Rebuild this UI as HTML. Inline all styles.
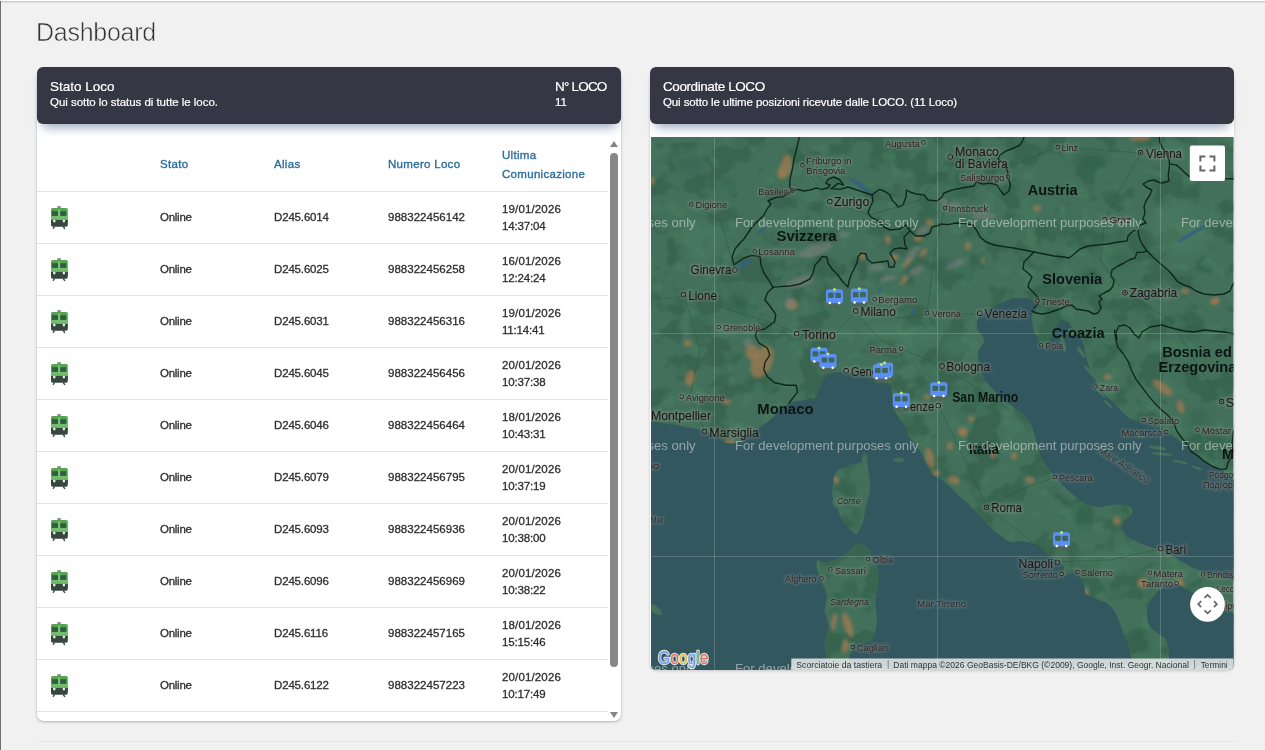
<!DOCTYPE html>
<html lang="it"><head><meta charset="utf-8"><title>Dashboard</title>
<style>
*{box-sizing:border-box;margin:0;padding:0}
html,body{width:1265px;height:750px;overflow:hidden}
body{background:#f1f1f1;font-family:"Liberation Sans",sans-serif;position:relative;color:#333}
.topline{position:absolute;left:0;top:0;width:1265px;height:3px;background:linear-gradient(#fff 0,#fff 1px,#c9c9c9 1px,#d5d5d5 2px,#e6e6e6 3px)}
.leftline{position:absolute;left:0;top:1px;width:1px;height:749px;background:#6e6e6e}
.title{position:absolute;left:36px;top:15px;font-size:25px;font-weight:400;color:#333;-webkit-text-stroke:0.55px #f1f1f1;line-height:34px;letter-spacing:-0.26px}
.card{position:absolute;background:#fff;border-radius:7px;box-shadow:0 1px 3px rgba(0,0,0,.28)}
#card1{left:37px;top:70px;width:584px;height:651px}
#card2{left:650px;top:70px;width:584px;height:600px;box-shadow:0 1px 3px rgba(0,0,0,.18)}
.hdr{position:absolute;top:67px;height:57px;width:584px;background:#363744;border-radius:6px;color:#fff;box-shadow:0 9px 10px -6px rgba(80,100,135,.6)}
#hdr1{left:37px}#hdr2{left:650px}
.h1t{position:absolute;left:13px;top:10.6px;-webkit-text-stroke:0.2px #fff;font-size:13.5px;line-height:18px;white-space:nowrap}
.h1s{position:absolute;left:13px;top:27.8px;-webkit-text-stroke:0.2px #fff;font-size:11.5px;line-height:15px;white-space:nowrap;letter-spacing:-0.04px}
.h1t.r,.h1s.r{left:518px}
.thead{position:absolute;left:37px;top:137px;width:571px;height:55px;border-bottom:1px solid #e3e4e6}
.th{position:absolute;font-size:11.5px;font-weight:400;color:#2d6c9c;-webkit-text-stroke:0.35px #2d6c9c;line-height:16px;white-space:nowrap;letter-spacing:0.3px}
.th{top:19px}.th.a{top:10px}.th.b{top:29px}
.c1{left:123px}.c2{left:237px}.c3{left:351px}.c4{left:465px}
.row{position:absolute;left:37px;width:571px;height:53px;border-bottom:1px solid #e3e4e6}
.c{position:absolute;top:18px;font-size:11.5px;font-weight:400;color:#2e2e2e;-webkit-text-stroke:0.3px #2e2e2e;line-height:16px;white-space:nowrap}
.c.l1{top:10px}.c.l2{top:27px}
.row svg{position:absolute;left:13px;top:14px}
.lastline{display:none}
.sb-thumb{position:absolute;left:610.4px;top:153px;width:7.4px;height:514px;border-radius:4px;background:#878787}
.sb-up{position:absolute;left:609.8px;top:140.8px;border:4.2px solid transparent;border-bottom:6px solid #858585;border-top:0}
.sb-down{position:absolute;left:609.8px;top:711.8px;border:4.2px solid transparent;border-top:6px solid #858585;border-bottom:0}
.hr{position:absolute;left:37px;top:741px;width:1199px;height:1px;background:#e6e6e6}
#map{position:absolute;left:651px;top:137px}

.c.c1{letter-spacing:-0.26px}.c.c2{letter-spacing:-0.16px}.c.c3{letter-spacing:0.02px}.c.l1{letter-spacing:0.14px}.c.l2{letter-spacing:-0.17px}
#hdr1 .h1t.r{letter-spacing:-0.8px}
#hdr2 .h1t{letter-spacing:-0.42px}#hdr2 .h1s{letter-spacing:-0.115px}

#wrap{position:absolute;left:0;top:0;width:1265px;height:750px;will-change:transform}

</style></head><body><div id="wrap">
<div class="topline"></div><div class="leftline"></div>
<h1 class="title">Dashboard</h1>
<div class="card" id="card1"></div>
<div class="hdr" id="hdr1"><div class="h1t">Stato Loco</div><div class="h1s">Qui sotto lo status di tutte le loco.</div><div class="h1t r">N° LOCO</div><div class="h1s r">11</div></div>
<div class="thead"><span class="th c1">Stato</span><span class="th c2">Alias</span><span class="th c3">Numero Loco</span><span class="th c4 a">Ultima</span><span class="th c4 b">Comunicazione</span></div>
<div class="row" style="top:191px"><svg width="19" height="25" viewBox="0 0 19 25"><rect x="7.2" y="1" width="3.8" height="3" rx="1" fill="#8b958c"/><rect x="1" y="2.9" width="16.8" height="13" rx="1.6" fill="#55a353"/><rect x="1" y="10.8" width="16.8" height="4.5" fill="#72bc6e"/><rect x="1.9" y="6.2" width="6.3" height="4.7" fill="#2c6238"/><rect x="10.1" y="6.2" width="6" height="4.7" fill="#2c6238"/><rect x="8.2" y="4.5" width="1.9" height="7" fill="#86c486"/><rect x="1" y="14.9" width="16.8" height="6.8" rx="1.8" fill="#37463e"/><rect x="1" y="14.9" width="16.8" height="3" fill="#37463e"/><circle cx="4.3" cy="16.1" r="1.3" fill="#e6f5e0"/><circle cx="13.9" cy="16.1" r="1.3" fill="#e6f5e0"/><path d="M4.6 21.5l-1.6 2.4M13.2 21.5l1.7 2.4" stroke="#37463e" stroke-width="1.3"/></svg>
<span class="c c1">Online</span><span class="c c2">D245.6014</span><span class="c c3">988322456142</span><span class="c c4 l1">19/01/2026</span><span class="c c4 l2">14:37:04</span></div>
<div class="row" style="top:243px"><svg width="19" height="25" viewBox="0 0 19 25"><rect x="7.2" y="1" width="3.8" height="3" rx="1" fill="#8b958c"/><rect x="1" y="2.9" width="16.8" height="13" rx="1.6" fill="#55a353"/><rect x="1" y="10.8" width="16.8" height="4.5" fill="#72bc6e"/><rect x="1.9" y="6.2" width="6.3" height="4.7" fill="#2c6238"/><rect x="10.1" y="6.2" width="6" height="4.7" fill="#2c6238"/><rect x="8.2" y="4.5" width="1.9" height="7" fill="#86c486"/><rect x="1" y="14.9" width="16.8" height="6.8" rx="1.8" fill="#37463e"/><rect x="1" y="14.9" width="16.8" height="3" fill="#37463e"/><circle cx="4.3" cy="16.1" r="1.3" fill="#e6f5e0"/><circle cx="13.9" cy="16.1" r="1.3" fill="#e6f5e0"/><path d="M4.6 21.5l-1.6 2.4M13.2 21.5l1.7 2.4" stroke="#37463e" stroke-width="1.3"/></svg>
<span class="c c1">Online</span><span class="c c2">D245.6025</span><span class="c c3">988322456258</span><span class="c c4 l1">16/01/2026</span><span class="c c4 l2">12:24:24</span></div>
<div class="row" style="top:295px"><svg width="19" height="25" viewBox="0 0 19 25"><rect x="7.2" y="1" width="3.8" height="3" rx="1" fill="#8b958c"/><rect x="1" y="2.9" width="16.8" height="13" rx="1.6" fill="#55a353"/><rect x="1" y="10.8" width="16.8" height="4.5" fill="#72bc6e"/><rect x="1.9" y="6.2" width="6.3" height="4.7" fill="#2c6238"/><rect x="10.1" y="6.2" width="6" height="4.7" fill="#2c6238"/><rect x="8.2" y="4.5" width="1.9" height="7" fill="#86c486"/><rect x="1" y="14.9" width="16.8" height="6.8" rx="1.8" fill="#37463e"/><rect x="1" y="14.9" width="16.8" height="3" fill="#37463e"/><circle cx="4.3" cy="16.1" r="1.3" fill="#e6f5e0"/><circle cx="13.9" cy="16.1" r="1.3" fill="#e6f5e0"/><path d="M4.6 21.5l-1.6 2.4M13.2 21.5l1.7 2.4" stroke="#37463e" stroke-width="1.3"/></svg>
<span class="c c1">Online</span><span class="c c2">D245.6031</span><span class="c c3">988322456316</span><span class="c c4 l1">19/01/2026</span><span class="c c4 l2">11:14:41</span></div>
<div class="row" style="top:347px"><svg width="19" height="25" viewBox="0 0 19 25"><rect x="7.2" y="1" width="3.8" height="3" rx="1" fill="#8b958c"/><rect x="1" y="2.9" width="16.8" height="13" rx="1.6" fill="#55a353"/><rect x="1" y="10.8" width="16.8" height="4.5" fill="#72bc6e"/><rect x="1.9" y="6.2" width="6.3" height="4.7" fill="#2c6238"/><rect x="10.1" y="6.2" width="6" height="4.7" fill="#2c6238"/><rect x="8.2" y="4.5" width="1.9" height="7" fill="#86c486"/><rect x="1" y="14.9" width="16.8" height="6.8" rx="1.8" fill="#37463e"/><rect x="1" y="14.9" width="16.8" height="3" fill="#37463e"/><circle cx="4.3" cy="16.1" r="1.3" fill="#e6f5e0"/><circle cx="13.9" cy="16.1" r="1.3" fill="#e6f5e0"/><path d="M4.6 21.5l-1.6 2.4M13.2 21.5l1.7 2.4" stroke="#37463e" stroke-width="1.3"/></svg>
<span class="c c1">Online</span><span class="c c2">D245.6045</span><span class="c c3">988322456456</span><span class="c c4 l1">20/01/2026</span><span class="c c4 l2">10:37:38</span></div>
<div class="row" style="top:399px"><svg width="19" height="25" viewBox="0 0 19 25"><rect x="7.2" y="1" width="3.8" height="3" rx="1" fill="#8b958c"/><rect x="1" y="2.9" width="16.8" height="13" rx="1.6" fill="#55a353"/><rect x="1" y="10.8" width="16.8" height="4.5" fill="#72bc6e"/><rect x="1.9" y="6.2" width="6.3" height="4.7" fill="#2c6238"/><rect x="10.1" y="6.2" width="6" height="4.7" fill="#2c6238"/><rect x="8.2" y="4.5" width="1.9" height="7" fill="#86c486"/><rect x="1" y="14.9" width="16.8" height="6.8" rx="1.8" fill="#37463e"/><rect x="1" y="14.9" width="16.8" height="3" fill="#37463e"/><circle cx="4.3" cy="16.1" r="1.3" fill="#e6f5e0"/><circle cx="13.9" cy="16.1" r="1.3" fill="#e6f5e0"/><path d="M4.6 21.5l-1.6 2.4M13.2 21.5l1.7 2.4" stroke="#37463e" stroke-width="1.3"/></svg>
<span class="c c1">Online</span><span class="c c2">D245.6046</span><span class="c c3">988322456464</span><span class="c c4 l1">18/01/2026</span><span class="c c4 l2">10:43:31</span></div>
<div class="row" style="top:451px"><svg width="19" height="25" viewBox="0 0 19 25"><rect x="7.2" y="1" width="3.8" height="3" rx="1" fill="#8b958c"/><rect x="1" y="2.9" width="16.8" height="13" rx="1.6" fill="#55a353"/><rect x="1" y="10.8" width="16.8" height="4.5" fill="#72bc6e"/><rect x="1.9" y="6.2" width="6.3" height="4.7" fill="#2c6238"/><rect x="10.1" y="6.2" width="6" height="4.7" fill="#2c6238"/><rect x="8.2" y="4.5" width="1.9" height="7" fill="#86c486"/><rect x="1" y="14.9" width="16.8" height="6.8" rx="1.8" fill="#37463e"/><rect x="1" y="14.9" width="16.8" height="3" fill="#37463e"/><circle cx="4.3" cy="16.1" r="1.3" fill="#e6f5e0"/><circle cx="13.9" cy="16.1" r="1.3" fill="#e6f5e0"/><path d="M4.6 21.5l-1.6 2.4M13.2 21.5l1.7 2.4" stroke="#37463e" stroke-width="1.3"/></svg>
<span class="c c1">Online</span><span class="c c2">D245.6079</span><span class="c c3">988322456795</span><span class="c c4 l1">20/01/2026</span><span class="c c4 l2">10:37:19</span></div>
<div class="row" style="top:503px"><svg width="19" height="25" viewBox="0 0 19 25"><rect x="7.2" y="1" width="3.8" height="3" rx="1" fill="#8b958c"/><rect x="1" y="2.9" width="16.8" height="13" rx="1.6" fill="#55a353"/><rect x="1" y="10.8" width="16.8" height="4.5" fill="#72bc6e"/><rect x="1.9" y="6.2" width="6.3" height="4.7" fill="#2c6238"/><rect x="10.1" y="6.2" width="6" height="4.7" fill="#2c6238"/><rect x="8.2" y="4.5" width="1.9" height="7" fill="#86c486"/><rect x="1" y="14.9" width="16.8" height="6.8" rx="1.8" fill="#37463e"/><rect x="1" y="14.9" width="16.8" height="3" fill="#37463e"/><circle cx="4.3" cy="16.1" r="1.3" fill="#e6f5e0"/><circle cx="13.9" cy="16.1" r="1.3" fill="#e6f5e0"/><path d="M4.6 21.5l-1.6 2.4M13.2 21.5l1.7 2.4" stroke="#37463e" stroke-width="1.3"/></svg>
<span class="c c1">Online</span><span class="c c2">D245.6093</span><span class="c c3">988322456936</span><span class="c c4 l1">20/01/2026</span><span class="c c4 l2">10:38:00</span></div>
<div class="row" style="top:555px"><svg width="19" height="25" viewBox="0 0 19 25"><rect x="7.2" y="1" width="3.8" height="3" rx="1" fill="#8b958c"/><rect x="1" y="2.9" width="16.8" height="13" rx="1.6" fill="#55a353"/><rect x="1" y="10.8" width="16.8" height="4.5" fill="#72bc6e"/><rect x="1.9" y="6.2" width="6.3" height="4.7" fill="#2c6238"/><rect x="10.1" y="6.2" width="6" height="4.7" fill="#2c6238"/><rect x="8.2" y="4.5" width="1.9" height="7" fill="#86c486"/><rect x="1" y="14.9" width="16.8" height="6.8" rx="1.8" fill="#37463e"/><rect x="1" y="14.9" width="16.8" height="3" fill="#37463e"/><circle cx="4.3" cy="16.1" r="1.3" fill="#e6f5e0"/><circle cx="13.9" cy="16.1" r="1.3" fill="#e6f5e0"/><path d="M4.6 21.5l-1.6 2.4M13.2 21.5l1.7 2.4" stroke="#37463e" stroke-width="1.3"/></svg>
<span class="c c1">Online</span><span class="c c2">D245.6096</span><span class="c c3">988322456969</span><span class="c c4 l1">20/01/2026</span><span class="c c4 l2">10:38:22</span></div>
<div class="row" style="top:607px"><svg width="19" height="25" viewBox="0 0 19 25"><rect x="7.2" y="1" width="3.8" height="3" rx="1" fill="#8b958c"/><rect x="1" y="2.9" width="16.8" height="13" rx="1.6" fill="#55a353"/><rect x="1" y="10.8" width="16.8" height="4.5" fill="#72bc6e"/><rect x="1.9" y="6.2" width="6.3" height="4.7" fill="#2c6238"/><rect x="10.1" y="6.2" width="6" height="4.7" fill="#2c6238"/><rect x="8.2" y="4.5" width="1.9" height="7" fill="#86c486"/><rect x="1" y="14.9" width="16.8" height="6.8" rx="1.8" fill="#37463e"/><rect x="1" y="14.9" width="16.8" height="3" fill="#37463e"/><circle cx="4.3" cy="16.1" r="1.3" fill="#e6f5e0"/><circle cx="13.9" cy="16.1" r="1.3" fill="#e6f5e0"/><path d="M4.6 21.5l-1.6 2.4M13.2 21.5l1.7 2.4" stroke="#37463e" stroke-width="1.3"/></svg>
<span class="c c1">Online</span><span class="c c2">D245.6116</span><span class="c c3">988322457165</span><span class="c c4 l1">18/01/2026</span><span class="c c4 l2">15:15:46</span></div>
<div class="row" style="top:659px"><svg width="19" height="25" viewBox="0 0 19 25"><rect x="7.2" y="1" width="3.8" height="3" rx="1" fill="#8b958c"/><rect x="1" y="2.9" width="16.8" height="13" rx="1.6" fill="#55a353"/><rect x="1" y="10.8" width="16.8" height="4.5" fill="#72bc6e"/><rect x="1.9" y="6.2" width="6.3" height="4.7" fill="#2c6238"/><rect x="10.1" y="6.2" width="6" height="4.7" fill="#2c6238"/><rect x="8.2" y="4.5" width="1.9" height="7" fill="#86c486"/><rect x="1" y="14.9" width="16.8" height="6.8" rx="1.8" fill="#37463e"/><rect x="1" y="14.9" width="16.8" height="3" fill="#37463e"/><circle cx="4.3" cy="16.1" r="1.3" fill="#e6f5e0"/><circle cx="13.9" cy="16.1" r="1.3" fill="#e6f5e0"/><path d="M4.6 21.5l-1.6 2.4M13.2 21.5l1.7 2.4" stroke="#37463e" stroke-width="1.3"/></svg>
<span class="c c1">Online</span><span class="c c2">D245.6122</span><span class="c c3">988322457223</span><span class="c c4 l1">20/01/2026</span><span class="c c4 l2">10:17:49</span></div>

<div class="lastline"></div>
<div class="sb-up"></div><div class="sb-thumb"></div><div class="sb-down"></div>
<div class="card" id="card2"></div>
<div class="hdr" id="hdr2"><div class="h1t">Coordinate LOCO</div><div class="h1s">Qui sotto le ultime posizioni ricevute dalle LOCO. (11 Loco)</div></div>
<svg id="map" width="583" height="533" viewBox="651 137 583 533" font-family="Liberation Sans, sans-serif">
<defs><clipPath id="mc"><path d="M651,137H1233.5V665a5,5 0 0 1 -5,5H656a5,5 0 0 1 -5,-5Z"/></clipPath><filter id="b2" x="-30%" y="-30%" width="160%" height="160%"><feGaussianBlur stdDeviation="1.6"/></filter><filter id="b1" x="-30%" y="-30%" width="160%" height="160%"><feGaussianBlur stdDeviation="0.7"/></filter><filter id="b4" x="-30%" y="-30%" width="160%" height="160%"><feGaussianBlur stdDeviation="4"/></filter><filter id="tx" x="0" y="0" width="100%" height="100%" color-interpolation-filters="sRGB"><feTurbulence type="fractalNoise" baseFrequency="0.03 0.035" numOctaves="3" seed="11"/><feColorMatrix type="matrix" values="0 0 0 0 0.16  0 0 0 0 0.33  0 0 0 0 0.25  9 0 0 0 -4.6"/></filter><filter id="tx2" x="0" y="0" width="100%" height="100%" color-interpolation-filters="sRGB"><feTurbulence type="fractalNoise" baseFrequency="0.05" numOctaves="2" seed="3"/><feColorMatrix type="matrix" values="0 0 0 0 0.30  0 0 0 0 0.52  0 0 0 0 0.40  0 7 0 0 -3.9"/></filter><filter id="halo" x="0" y="0" width="100%" height="100%" filterUnits="objectBoundingBox"><feMorphology in="SourceAlpha" operator="dilate" radius="0.9" result="d"/><feGaussianBlur in="d" stdDeviation="1.0" result="db"/><feFlood flood-color="#d9cfc8" flood-opacity="0.22"/><feComposite in2="db" operator="in" result="h"/><feMerge><feMergeNode in="h"/><feMergeNode in="SourceGraphic"/></feMerge></filter></defs>
<g clip-path="url(#mc)">
<rect x="651" y="137" width="583" height="533" fill="#43705a"/>
<rect x="651" y="137" width="583" height="533" filter="url(#tx)" opacity="0.38"/>
<rect x="651" y="137" width="583" height="533" filter="url(#tx2)" opacity="0.35"/>
<ellipse cx="786.0" cy="166.0" rx="6.0" ry="12.0" fill="#a6794f" fill-opacity="0.7" filter="url(#b2)" transform="rotate(12 786.0 166.0)"/>
<ellipse cx="781.0" cy="174.0" rx="4.0" ry="5.0" fill="#a6794f" fill-opacity="0.7" filter="url(#b2)"/>
<ellipse cx="652.0" cy="181.0" rx="3.0" ry="4.0" fill="#a6794f" fill-opacity="0.7" filter="url(#b2)"/>
<ellipse cx="762.0" cy="362.0" rx="10.0" ry="17.0" fill="#a6794f" fill-opacity="0.7" filter="url(#b2)" transform="rotate(25 762.0 362.0)"/>
<ellipse cx="752.0" cy="352.0" rx="6.0" ry="8.0" fill="#a6794f" fill-opacity="0.7" filter="url(#b2)"/>
<ellipse cx="690.0" cy="378.0" rx="5.0" ry="8.0" fill="#a6794f" fill-opacity="0.7" filter="url(#b2)" transform="rotate(10 690.0 378.0)"/>
<ellipse cx="688.0" cy="343.0" rx="4.0" ry="4.0" fill="#a6794f" fill-opacity="0.7" filter="url(#b2)"/>
<ellipse cx="792.0" cy="305.0" rx="6.0" ry="5.0" fill="#a6794f" fill-opacity="0.7" filter="url(#b2)"/>
<ellipse cx="727.0" cy="402.0" rx="4.0" ry="3.0" fill="#a6794f" fill-opacity="0.7" filter="url(#b2)"/>
<ellipse cx="730.0" cy="442.0" rx="6.0" ry="3.0" fill="#a6794f" fill-opacity="0.7" filter="url(#b2)"/>
<ellipse cx="1162.5" cy="387.6" rx="12.0" ry="4.5" fill="#a6794f" fill-opacity="0.7" filter="url(#b2)" transform="rotate(38 1162.5 387.6)"/>
<ellipse cx="1180.7" cy="406.8" rx="3.5" ry="7.0" fill="#a6794f" fill-opacity="0.7" filter="url(#b2)" transform="rotate(-15 1180.7 406.8)"/>
<ellipse cx="1108.0" cy="377.0" rx="4.0" ry="3.0" fill="#a6794f" fill-opacity="0.7" filter="url(#b2)"/>
<ellipse cx="1214.0" cy="302.0" rx="4.0" ry="3.0" fill="#a6794f" fill-opacity="0.7" filter="url(#b2)"/>
<ellipse cx="1185.0" cy="291.0" rx="4.0" ry="3.0" fill="#a6794f" fill-opacity="0.7" filter="url(#b2)"/>
<ellipse cx="1216.0" cy="300.0" rx="4.0" ry="3.0" fill="#a6794f" fill-opacity="0.7" filter="url(#b2)"/>
<ellipse cx="964.0" cy="432.0" rx="4.0" ry="5.0" fill="#a6794f" fill-opacity="0.7" filter="url(#b2)"/>
<ellipse cx="971.0" cy="419.0" rx="3.0" ry="3.0" fill="#a6794f" fill-opacity="0.7" filter="url(#b2)"/>
<ellipse cx="993.0" cy="454.0" rx="3.0" ry="4.0" fill="#a6794f" fill-opacity="0.7" filter="url(#b2)"/>
<ellipse cx="1014.0" cy="456.0" rx="3.0" ry="4.0" fill="#a6794f" fill-opacity="0.7" filter="url(#b2)"/>
<ellipse cx="930.0" cy="458.0" rx="4.0" ry="11.0" fill="#a6794f" fill-opacity="0.7" filter="url(#b2)" transform="rotate(-15 930.0 458.0)"/>
<ellipse cx="936.0" cy="473.0" rx="4.0" ry="3.0" fill="#a6794f" fill-opacity="0.7" filter="url(#b2)"/>
<ellipse cx="954.0" cy="480.0" rx="6.0" ry="4.0" fill="#a6794f" fill-opacity="0.7" filter="url(#b2)" transform="rotate(20 954.0 480.0)"/>
<ellipse cx="950.0" cy="446.0" rx="3.0" ry="4.0" fill="#a6794f" fill-opacity="0.7" filter="url(#b2)"/>
<ellipse cx="961.0" cy="432.0" rx="3.0" ry="3.0" fill="#a6794f" fill-opacity="0.7" filter="url(#b2)"/>
<ellipse cx="1030.0" cy="480.0" rx="5.0" ry="3.0" fill="#a6794f" fill-opacity="0.7" filter="url(#b2)" transform="rotate(15 1030.0 480.0)"/>
<ellipse cx="927.0" cy="397.0" rx="3.0" ry="3.0" fill="#a6794f" fill-opacity="0.7" filter="url(#b2)"/>
<ellipse cx="838.0" cy="628.0" rx="5.0" ry="10.0" fill="#a6794f" fill-opacity="0.7" filter="url(#b2)" transform="rotate(10 838.0 628.0)"/>
<ellipse cx="848.0" cy="640.0" rx="5.0" ry="12.0" fill="#a6794f" fill-opacity="0.7" filter="url(#b2)" transform="rotate(-10 848.0 640.0)"/>
<ellipse cx="836.0" cy="480.0" rx="3.0" ry="3.0" fill="#a6794f" fill-opacity="0.7" filter="url(#b2)"/>
<ellipse cx="1143.0" cy="583.0" rx="6.0" ry="5.0" fill="#a6794f" fill-opacity="0.7" filter="url(#b2)"/>
<ellipse cx="1180.0" cy="583.0" rx="4.0" ry="4.0" fill="#a6794f" fill-opacity="0.7" filter="url(#b2)"/>
<ellipse cx="1117.0" cy="521.0" rx="4.0" ry="4.0" fill="#a6794f" fill-opacity="0.7" filter="url(#b2)"/>
<ellipse cx="1086.0" cy="592.0" rx="3.0" ry="3.0" fill="#a6794f" fill-opacity="0.7" filter="url(#b2)"/>
<ellipse cx="1037.0" cy="208.0" rx="4.0" ry="3.0" fill="#a6794f" fill-opacity="0.7" filter="url(#b2)"/>
<ellipse cx="968.0" cy="246.0" rx="3.0" ry="4.0" fill="#a6794f" fill-opacity="0.7" filter="url(#b2)"/>
<ellipse cx="1140.0" cy="138.0" rx="11.0" ry="3.0" fill="#a6794f" fill-opacity="0.7" filter="url(#b2)"/>
<ellipse cx="929.6" cy="222.4" rx="4.0" ry="3.0" fill="#a6794f" fill-opacity="0.7" filter="url(#b2)"/>
<ellipse cx="888.0" cy="240.0" rx="3.0" ry="4.0" fill="#a6794f" fill-opacity="0.7" filter="url(#b2)"/>
<ellipse cx="918.4" cy="238.4" rx="5.0" ry="3.0" fill="#a6794f" fill-opacity="0.7" filter="url(#b2)"/>
<ellipse cx="862.4" cy="256.0" rx="3.0" ry="4.0" fill="#a6794f" fill-opacity="0.7" filter="url(#b2)"/>
<ellipse cx="894.4" cy="257.6" rx="4.0" ry="3.0" fill="#a6794f" fill-opacity="0.7" filter="url(#b2)"/>
<ellipse cx="907.2" cy="262.4" rx="2.5" ry="7.0" fill="#a6794f" fill-opacity="0.7" filter="url(#b2)" transform="rotate(40 907.2 262.4)"/>
<ellipse cx="923.2" cy="252.8" rx="2.5" ry="6.0" fill="#a6794f" fill-opacity="0.7" filter="url(#b2)" transform="rotate(40 923.2 252.8)"/>
<ellipse cx="904.0" cy="280.0" rx="2.5" ry="6.0" fill="#a6794f" fill-opacity="0.7" filter="url(#b2)" transform="rotate(40 904.0 280.0)"/>
<ellipse cx="982.4" cy="260.8" rx="1.5" ry="3.5" fill="#a6794f" fill-opacity="0.7" filter="url(#b2)" transform="rotate(20 982.4 260.8)"/>
<ellipse cx="1150.0" cy="545.0" rx="3.0" ry="2.0" fill="#a6794f" fill-opacity="0.7" filter="url(#b2)"/>
<ellipse cx="1127.0" cy="660.0" rx="3.0" ry="3.0" fill="#a6794f" fill-opacity="0.7" filter="url(#b2)"/>
<ellipse cx="815.0" cy="250.0" rx="18.0" ry="6.0" fill="#7d7f80" fill-opacity="0.55" filter="url(#b2)" transform="rotate(-20 815.0 250.0)"/>
<ellipse cx="800.0" cy="282.0" rx="14.0" ry="5.0" fill="#7d7f80" fill-opacity="0.55" filter="url(#b2)" transform="rotate(-15 800.0 282.0)"/>
<ellipse cx="923.2" cy="230.4" rx="8.0" ry="3.5" fill="#7d7f80" fill-opacity="0.55" filter="url(#b2)" transform="rotate(-30 923.2 230.4)"/>
<ellipse cx="843.2" cy="234.4" rx="6.0" ry="3.0" fill="#7d7f80" fill-opacity="0.55" filter="url(#b2)"/>
<ellipse cx="912.0" cy="254.4" rx="4.0" ry="10.0" fill="#7d7f80" fill-opacity="0.55" filter="url(#b2)" transform="rotate(35 912.0 254.4)"/>
<ellipse cx="916.8" cy="270.4" rx="8.0" ry="4.0" fill="#7d7f80" fill-opacity="0.55" filter="url(#b2)" transform="rotate(-30 916.8 270.4)"/>
<ellipse cx="876.8" cy="267.2" rx="8.0" ry="3.0" fill="#7d7f80" fill-opacity="0.55" filter="url(#b2)"/>
<ellipse cx="888.0" cy="278.4" rx="9.0" ry="3.0" fill="#7d7f80" fill-opacity="0.55" filter="url(#b2)" transform="rotate(-10 888.0 278.4)"/>
<ellipse cx="955.2" cy="264.0" rx="10.0" ry="3.5" fill="#7d7f80" fill-opacity="0.55" filter="url(#b2)" transform="rotate(-25 955.2 264.0)"/>
<ellipse cx="984.0" cy="216.0" rx="12.0" ry="3.5" fill="#7d7f80" fill-opacity="0.55" filter="url(#b2)"/>
<ellipse cx="944.0" cy="201.6" rx="5.0" ry="3.0" fill="#7d7f80" fill-opacity="0.55" filter="url(#b2)"/>
<ellipse cx="790.0" cy="303.0" rx="5.0" ry="6.0" fill="#7d7f80" fill-opacity="0.55" filter="url(#b2)"/>
<ellipse cx="748.0" cy="343.0" rx="4.0" ry="5.0" fill="#7d7f80" fill-opacity="0.55" filter="url(#b2)"/>
<ellipse cx="955.0" cy="205.0" rx="6.0" ry="3.0" fill="#7d7f80" fill-opacity="0.55" filter="url(#b2)"/>
<ellipse cx="690.0" cy="165.0" rx="14.0" ry="9.0" fill="#2f5f49" fill-opacity="0.45" filter="url(#b4)"/>
<ellipse cx="725.0" cy="185.0" rx="10.0" ry="7.0" fill="#2f5f49" fill-opacity="0.45" filter="url(#b4)"/>
<ellipse cx="1090.0" cy="160.0" rx="20.0" ry="10.0" fill="#2f5f49" fill-opacity="0.45" filter="url(#b4)"/>
<ellipse cx="1060.0" cy="230.0" rx="16.0" ry="8.0" fill="#2f5f49" fill-opacity="0.45" filter="url(#b4)"/>
<ellipse cx="1120.0" cy="260.0" rx="14.0" ry="8.0" fill="#2f5f49" fill-opacity="0.45" filter="url(#b4)"/>
<ellipse cx="700.0" cy="330.0" rx="10.0" ry="14.0" fill="#2f5f49" fill-opacity="0.45" filter="url(#b4)"/>
<ellipse cx="740.0" cy="300.0" rx="8.0" ry="10.0" fill="#2f5f49" fill-opacity="0.45" filter="url(#b4)"/>
<ellipse cx="1190.0" cy="330.0" rx="12.0" ry="8.0" fill="#2f5f49" fill-opacity="0.45" filter="url(#b4)"/>
<ellipse cx="1200.0" cy="420.0" rx="10.0" ry="12.0" fill="#2f5f49" fill-opacity="0.45" filter="url(#b4)"/>
<ellipse cx="1080.0" cy="520.0" rx="8.0" ry="8.0" fill="#2f5f49" fill-opacity="0.45" filter="url(#b4)"/>
<ellipse cx="1000.0" cy="500.0" rx="6.0" ry="6.0" fill="#2f5f49" fill-opacity="0.45" filter="url(#b4)"/>
<ellipse cx="1140.0" cy="640.0" rx="8.0" ry="12.0" fill="#2f5f49" fill-opacity="0.45" filter="url(#b4)"/>
<ellipse cx="860.0" cy="520.0" rx="6.0" ry="8.0" fill="#2f5f49" fill-opacity="0.45" filter="url(#b4)"/>
<ellipse cx="900.0" cy="335.0" rx="40.0" ry="10.0" fill="#4a7f62" fill-opacity="0.5" filter="url(#b4)"/>
<ellipse cx="960.0" cy="345.0" rx="20.0" ry="12.0" fill="#4a7f62" fill-opacity="0.5" filter="url(#b4)"/>
<ellipse cx="1180.0" cy="230.0" rx="30.0" ry="25.0" fill="#4a7f62" fill-opacity="0.5" filter="url(#b4)"/>
<ellipse cx="700.0" cy="240.0" rx="20.0" ry="20.0" fill="#4a7f62" fill-opacity="0.5" filter="url(#b4)"/>
<ellipse cx="1100.0" cy="560.0" rx="25.0" ry="10.0" fill="#4a7f62" fill-opacity="0.5" filter="url(#b4)" transform="rotate(20 1100.0 560.0)"/>
<ellipse cx="744.0" cy="264.0" rx="9.0" ry="2.2" fill="#35627a" fill-opacity="0.9" filter="url(#b1)" transform="rotate(-25 744.0 264.0)"/>
<ellipse cx="860.5" cy="185.5" rx="13.0" ry="2.6" fill="#35627a" fill-opacity="0.9" filter="url(#b1)" transform="rotate(34 860.5 185.5)"/>
<ellipse cx="760.7" cy="231.0" rx="6.0" ry="1.5" fill="#35627a" fill-opacity="0.9" filter="url(#b1)" transform="rotate(-40 760.7 231.0)"/>
<ellipse cx="914.0" cy="312.0" rx="1.8" ry="4.5" fill="#35627a" fill-opacity="0.9" filter="url(#b1)"/>
<ellipse cx="1191.0" cy="234.0" rx="17.0" ry="2.0" fill="#35627a" fill-opacity="0.9" filter="url(#b1)" transform="rotate(-30 1191.0 234.0)"/>
<ellipse cx="880.0" cy="290.0" rx="1.2" ry="4.0" fill="#35627a" fill-opacity="0.9" filter="url(#b1)" transform="rotate(20 880.0 290.0)"/>
<g fill="#32575e" stroke="#32575e" stroke-width="0.6" stroke-linejoin="round">
<path d="M651.0,420.8 L659.6,422.4 L669.2,424.8 L678.8,425.6 L688.4,428.0 L698.0,429.6 L704.4,431.2 L714.0,434.4 L720.4,439.2 L725.2,443.2 L733.2,444.0 L739.6,441.6 L744.4,437.6 L752.4,432.8 L762.0,426.4 L768.4,421.6 L776.4,414.4 L782.8,408.8 L789.2,403.2 L797.2,401.6 L806.8,400.0 L811.6,398.4 L813.6,399.8 L816.0,396.6 L818.4,391.8 L820.8,387.0 L822.4,383.0 L824.4,379.0 L827.2,375.8 L832.0,373.8 L837.6,372.6 L843.2,372.2 L845.9,372.3 L853.3,374.5 L861.9,376.8 L869.3,377.9 L876.8,379.8 L884.3,382.5 L890.7,385.1 L892.0,397.3 L893.3,406.7 L896.0,413.3 L900.0,420.0 L904.0,425.3 L906.0,430.7 L908.0,436.0 L913.3,442.7 L918.7,449.3 L922.7,456.0 L925.3,462.7 L929.3,470.7 L934.7,477.3 L935.2,476.4 L940.8,479.6 L947.2,484.4 L953.6,490.8 L960.0,497.2 L966.4,502.8 L972.8,508.4 L977.6,514.8 L982.4,519.6 L988.8,526.0 L995.2,532.4 L1001.2,536.5 L1006.8,540.7 L1011.5,542.5 L1017.1,542.1 L1022.7,541.6 L1029.2,542.5 L1034.8,543.9 L1039.5,546.7 L1042.3,550.5 L1045.1,554.2 L1047.9,556.1 L1053.5,558.9 L1057.2,561.7 L1060.0,563.0 L1064.0,567.0 L1063.0,573.0 L1058.0,575.0 L1066.0,576.0 L1074.0,573.0 L1080.0,578.0 L1084.0,586.0 L1085.0,594.0 L1090.0,597.0 L1098.0,600.0 L1106.0,603.0 L1112.0,608.0 L1116.0,614.0 L1119.0,622.0 L1122.0,630.0 L1125.0,638.0 L1128.0,646.0 L1130.0,654.0 L1131.0,658.0 L1134.0,670.0 L651.0,670.0Z"/>
<path d="M1169.0,670.0 L1169.0,658.0 L1169.0,648.0 L1167.0,640.0 L1160.0,634.0 L1152.0,629.0 L1148.0,622.0 L1147.0,614.0 L1148.0,606.0 L1152.0,598.0 L1158.0,591.0 L1164.0,587.0 L1172.0,585.0 L1178.0,584.0 L1182.0,587.0 L1186.0,590.0 L1192.0,593.0 L1198.0,597.0 L1208.0,601.0 L1222.0,609.0 L1234.0,614.0 L1234.0,670.0Z"/>
<path d="M1234.0,580.0 L1212.0,574.0 L1200.0,570.0 L1190.0,566.0 L1180.0,560.0 L1170.0,554.0 L1160.0,549.0 L1150.0,547.0 L1140.0,543.0 L1130.0,538.0 L1124.0,532.0 L1122.0,526.0 L1126.0,520.0 L1132.0,515.0 L1133.0,509.0 L1128.0,505.0 L1118.0,504.0 L1108.0,505.0 L1100.0,507.0 L1090.0,505.0 L1080.0,500.0 L1070.0,492.0 L1062.0,484.0 L1055.0,477.0 L1048.0,468.0 L1042.0,458.0 L1038.0,446.0 L1034.0,432.0 L1030.0,420.0 L1030.0,422.0 L1026.0,416.0 L1020.0,412.0 L1014.0,407.0 L1006.0,401.0 L998.0,394.0 L990.0,386.0 L984.0,378.0 L981.0,370.0 L979.0,362.0 L978.0,354.0 L980.0,348.0 L985.0,342.0 L983.0,336.0 L978.0,330.0 L977.0,324.0 L979.0,317.0 L988.0,310.0 L1000.0,304.0 L1012.0,299.0 L1024.0,298.0 L1034.0,301.0 L1038.0,302.4 L1036.0,307.0 L1034.0,311.0 L1031.0,316.0 L1032.0,324.0 L1034.0,332.0 L1038.0,340.0 L1041.0,347.0 L1045.0,350.0 L1048.0,346.0 L1052.0,338.0 L1056.0,330.0 L1059.0,323.0 L1062.0,320.0 L1068.0,323.0 L1074.0,330.0 L1080.0,338.0 L1084.0,346.0 L1085.0,354.0 L1087.0,362.0 L1090.0,370.0 L1094.0,378.0 L1098.0,386.0 L1104.0,394.0 L1112.0,402.0 L1120.0,410.0 L1128.0,418.0 L1138.0,422.0 L1144.0,420.0 L1148.0,424.0 L1160.0,429.0 L1168.0,433.0 L1178.0,440.0 L1186.0,446.0 L1194.0,452.0 L1200.0,458.0 L1208.0,464.0 L1216.0,469.0 L1224.0,472.4 L1234.0,480.0 L1234.0,480.0Z"/>
</g>
<g fill="#43705a" stroke="#43705a" stroke-width="0.5" stroke-linejoin="round">
<path d="M865.0,452.4 L866.8,457.2 L867.4,463.2 L868.0,469.2 L869.2,476.4 L869.8,483.6 L869.8,490.8 L868.0,498.0 L866.2,504.0 L865.0,510.0 L863.8,517.2 L862.0,524.4 L859.0,530.4 L856.0,534.6 L852.4,531.6 L848.8,528.0 L845.2,523.2 L841.6,518.4 L839.2,513.6 L838.0,508.8 L834.4,506.4 L832.6,502.8 L833.2,498.0 L832.0,493.2 L832.6,488.4 L833.8,483.6 L833.2,478.8 L835.0,474.0 L838.0,470.4 L842.8,468.0 L847.6,466.2 L852.4,464.4 L857.2,463.8 L861.4,462.6 L862.6,457.2 L863.2,452.4Z"/>
<path d="M857.6,543.2 L864.0,546.0 L869.5,549.6 L870.4,555.1 L873.1,560.6 L876.8,566.1 L878.6,573.4 L878.6,582.5 L876.8,591.7 L875.0,600.8 L875.9,610.0 L876.8,619.1 L875.9,628.2 L874.0,635.5 L870.4,641.0 L864.0,642.9 L856.7,642.9 L853.0,644.7 L851.2,650.2 L849.4,655.7 L848.4,661.1 L847.9,671.2 L827.8,671.2 L827.4,661.1 L825.6,652.0 L824.7,642.9 L827.4,633.7 L829.3,626.4 L827.4,619.1 L824.7,611.8 L825.6,604.5 L827.4,597.2 L825.6,589.8 L822.9,584.4 L821.9,578.9 L818.3,573.4 L816.5,566.1 L817.4,560.6 L821.9,562.4 L827.4,562.4 L834.7,560.6 L842.0,556.9 L847.5,552.4 L853.0,546.9Z"/>
<path d="M893.0,459.5 L897.0,458.3 L903.0,458.8 L905.0,460.5 L901.0,462.0 L895.0,461.8Z"/>
<path d="M651.0,604.0 L655.0,605.0 L660.0,609.0 L662.0,614.0 L658.0,615.0 L651.0,611.0Z"/>
</g>
<clipPath id="isl"><path d="M865.0,452.4 L866.8,457.2 L867.4,463.2 L868.0,469.2 L869.2,476.4 L869.8,483.6 L869.8,490.8 L868.0,498.0 L866.2,504.0 L865.0,510.0 L863.8,517.2 L862.0,524.4 L859.0,530.4 L856.0,534.6 L852.4,531.6 L848.8,528.0 L845.2,523.2 L841.6,518.4 L839.2,513.6 L838.0,508.8 L834.4,506.4 L832.6,502.8 L833.2,498.0 L832.0,493.2 L832.6,488.4 L833.8,483.6 L833.2,478.8 L835.0,474.0 L838.0,470.4 L842.8,468.0 L847.6,466.2 L852.4,464.4 L857.2,463.8 L861.4,462.6 L862.6,457.2 L863.2,452.4Z"/><path d="M857.6,543.2 L864.0,546.0 L869.5,549.6 L870.4,555.1 L873.1,560.6 L876.8,566.1 L878.6,573.4 L878.6,582.5 L876.8,591.7 L875.0,600.8 L875.9,610.0 L876.8,619.1 L875.9,628.2 L874.0,635.5 L870.4,641.0 L864.0,642.9 L856.7,642.9 L853.0,644.7 L851.2,650.2 L849.4,655.7 L848.4,661.1 L847.9,671.2 L827.8,671.2 L827.4,661.1 L825.6,652.0 L824.7,642.9 L827.4,633.7 L829.3,626.4 L827.4,619.1 L824.7,611.8 L825.6,604.5 L827.4,597.2 L825.6,589.8 L822.9,584.4 L821.9,578.9 L818.3,573.4 L816.5,566.1 L817.4,560.6 L821.9,562.4 L827.4,562.4 L834.7,560.6 L842.0,556.9 L847.5,552.4 L853.0,546.9Z"/></clipPath>
<g clip-path="url(#isl)">
<rect x="800" y="450" width="100" height="220" filter="url(#tx)" opacity="0.38"/>
<ellipse cx="834.0" cy="622.0" rx="2.5" ry="9.0" fill="#a6794f" fill-opacity="0.75" filter="url(#b2)" transform="rotate(10 834.0 622.0)"/>
<ellipse cx="848.0" cy="625.0" rx="4.0" ry="13.0" fill="#a6794f" fill-opacity="0.75" filter="url(#b2)" transform="rotate(-18 848.0 625.0)"/>
<ellipse cx="845.0" cy="646.0" rx="3.5" ry="7.0" fill="#a6794f" fill-opacity="0.75" filter="url(#b2)" transform="rotate(10 845.0 646.0)"/>
<ellipse cx="836.0" cy="480.0" rx="3.0" ry="3.0" fill="#a6794f" fill-opacity="0.75" filter="url(#b2)"/>
<ellipse cx="818.5" cy="561.0" rx="2.0" ry="2.0" fill="#a6794f" fill-opacity="0.75" filter="url(#b2)"/>
<ellipse cx="850.0" cy="495.0" rx="7.0" ry="12.0" fill="#2f5f49" fill-opacity="0.5" filter="url(#b2)" transform="rotate(10 850.0 495.0)"/>
<ellipse cx="856.0" cy="515.0" rx="5.0" ry="8.0" fill="#2f5f49" fill-opacity="0.5" filter="url(#b2)"/>
<ellipse cx="850.0" cy="590.0" rx="8.0" ry="10.0" fill="#2f5f49" fill-opacity="0.5" filter="url(#b2)"/>
<ellipse cx="868.0" cy="600.0" rx="5.0" ry="14.0" fill="#2f5f49" fill-opacity="0.5" filter="url(#b2)"/>
<ellipse cx="835.0" cy="600.0" rx="5.0" ry="8.0" fill="#2f5f49" fill-opacity="0.5" filter="url(#b2)"/>
<ellipse cx="836.0" cy="645.0" rx="7.0" ry="8.0" fill="#2f5f49" fill-opacity="0.5" filter="url(#b2)"/>
</g>
<g fill="#43705a" filter="url(#b1)">
<ellipse cx="1063" cy="343" rx="2.2" ry="9" transform="rotate(-15 1063 343)"/>
<ellipse cx="1071" cy="332" rx="4" ry="4" transform="rotate(0 1071 332)"/>
<ellipse cx="1081" cy="352" rx="2" ry="7" transform="rotate(-35 1081 352)"/>
<ellipse cx="1090" cy="372" rx="1.6" ry="9" transform="rotate(-40 1090 372)"/>
<ellipse cx="1100" cy="392" rx="1.5" ry="8" transform="rotate(-45 1100 392)"/>
<ellipse cx="1158" cy="448" rx="9" ry="1.8" transform="rotate(8 1158 448)"/>
<ellipse cx="1162" cy="454" rx="11" ry="1.6" transform="rotate(5 1162 454)"/>
<ellipse cx="1180" cy="462" rx="8" ry="1.4" transform="rotate(12 1180 462)"/>
<ellipse cx="1197" cy="468" rx="6" ry="1.2" transform="rotate(20 1197 468)"/>
<ellipse cx="1140" cy="436" rx="5" ry="1.5" transform="rotate(15 1140 436)"/>
<ellipse cx="1108" cy="404" rx="1.4" ry="6" transform="rotate(-45 1108 404)"/>
</g>
<g fill="none" stroke="#0b2217" stroke-width="1.4" stroke-linejoin="round" stroke-linecap="round" stroke-opacity="0.92">
<path d="M799.4,137.0 L797.0,147.0 L794.0,159.0 L792.4,169.0 L790.0,179.0 L789.6,187.0 L792.4,190.6"/>
<path d="M792.4,190.6 L798.0,189.4 L804.0,191.0 L810.0,190.0 L816.0,188.0 L822.0,189.4 L828.0,188.0 L830.0,185.0 L826.0,183.4 L828.0,179.4 L834.0,177.0 L840.0,180.0 L843.6,185.0 L838.0,183.4 L834.0,186.6 L831.0,188.6 L840.0,189.4 L848.0,187.0 L860.0,191.0 L872.0,195.0"/>
<path d="M872.0,195.0 L873.0,201.0 L870.0,207.0 L868.0,213.0 L871.0,217.0 L878.0,221.0 L884.0,227.0 L890.0,230.0 L900.0,229.0 L906.0,225.0 L910.0,231.0 L904.0,237.0 L905.0,245.0 L907.0,249.0 L900.0,248.0 L894.0,249.0 L890.0,253.0 L892.0,257.0 L895.0,262.0 L894.0,267.0 L889.0,267.0 L888.0,261.0 L880.0,262.0 L872.0,263.0 L867.0,259.0 L866.0,254.0 L861.0,253.0 L858.0,257.0 L857.0,263.0 L854.0,269.0 L851.0,275.0 L849.0,281.0 L848.0,287.0 L842.0,281.0 L838.0,275.0 L832.0,269.0 L828.0,263.0 L827.0,257.0 L822.0,256.6 L819.0,261.0 L815.0,265.0 L813.0,273.0 L810.0,279.0 L800.0,284.0 L790.0,286.0 L780.0,286.6 L773.0,287.4"/>
<path d="M792.4,190.6 L788.0,194.0 L782.0,197.0 L777.0,197.0 L772.0,199.0 L768.0,201.0 L771.0,204.0 L767.0,209.0 L764.0,215.0 L758.0,221.0 L752.0,227.0 L748.0,233.0 L744.0,239.0 L740.0,243.0 L735.0,249.0 L732.0,257.0 L734.0,265.0 L738.0,262.0 L744.0,258.0 L752.0,255.4 L760.0,256.6 L761.0,265.0 L764.0,273.0 L768.0,279.0 L773.0,287.4"/>
<path d="M773.0,287.5 L767.4,292.8 L765.0,300.0 L769.8,306.0 L775.8,314.4 L774.6,321.6 L765.0,328.8 L756.6,331.2 L755.4,336.0 L759.0,343.2 L767.4,348.0 L769.8,355.2 L765.0,362.4 L763.8,369.6 L767.4,376.8 L774.6,382.8 L786.6,385.2 L796.2,385.2 L797.4,392.4 L792.6,398.4 L789.0,403.2"/>
<path d="M872.0,195.0 L877.0,191.0 L880.0,189.4 L886.0,192.0 L890.0,195.0 L892.0,200.0 L896.0,204.0 L898.0,207.0 L903.0,205.0 L906.0,197.0 L906.4,190.0 L910.0,192.0 L916.0,194.0 L924.0,195.0 L928.0,200.0 L937.0,201.0 L942.0,197.0 L944.0,193.0 L952.0,190.0 L962.0,188.0 L974.0,186.0 L976.0,182.0 L983.0,184.0 L990.0,183.0 L997.0,185.0 L1000.0,190.0 L1004.0,195.0 L1009.0,191.0 L1010.4,185.0 L1009.0,180.0 L1007.0,176.0 L1008.0,173.0 L1006.0,167.0 L1002.0,162.0 L998.0,159.0 L1000.0,155.0 L1006.0,151.0 L1014.0,148.0 L1020.0,145.0 L1023.0,140.0 L1024.0,137.0"/>
<path d="M910.0,231.0 L916.0,236.0 L924.0,236.0 L930.0,233.0 L932.0,227.0 L940.0,225.0 L940.0,224.0 L948.0,224.6 L956.0,223.0 L964.0,223.4 L973.0,225.0 L977.0,231.0 L980.0,237.0 L986.0,242.0 L994.0,245.0 L1004.0,246.6 L1014.0,248.0 L1024.0,250.0 L1034.0,252.0"/>
<path d="M1034.0,252.0 L1044.0,254.0 L1054.0,256.0 L1064.0,257.0 L1069.0,258.0 L1073.0,255.0 L1080.0,249.0 L1088.0,246.0 L1098.0,245.0 L1108.0,244.0 L1118.0,242.0 L1127.0,241.0 L1128.0,236.0 L1132.0,232.0 L1137.0,229.0"/>
<path d="M1137.0,229.0 L1140.0,225.0 L1146.0,223.0 L1143.0,219.0 L1145.0,213.0 L1144.0,207.0 L1146.0,201.0 L1150.0,195.0 L1152.0,190.0 L1146.0,187.0 L1143.0,184.0 L1148.0,181.0 L1154.0,180.0 L1158.0,182.0 L1161.6,183.2 L1168.9,181.0 L1168.2,175.1 L1168.9,170.7 L1169.6,164.1 L1168.9,159.0 L1166.0,153.0 L1163.0,148.7 L1160.1,142.9 L1159.4,137.0"/>
<path d="M1169.6,164.1 L1176.2,164.9 L1180.6,168.5 L1185.0,172.9 L1189.4,176.6 L1200.0,178.0 L1225.4,178.8 L1234.0,178.8"/>
<path d="M1034.0,252.0 L1029.0,257.0 L1024.0,262.0 L1023.0,269.0 L1028.0,273.0 L1032.0,277.0 L1029.0,283.0 L1028.0,287.0 L1031.0,290.0 L1036.0,295.0 L1039.0,300.0 L1038.0,304.0 L1034.0,308.0"/>
<path d="M1138.0,230.0 L1139.0,237.0 L1142.0,244.0 L1147.0,251.0 L1154.0,258.0 L1162.0,265.0 L1169.0,271.0 L1174.0,277.0 L1178.0,282.0 L1184.0,285.0 L1190.0,287.0 L1196.0,291.0 L1204.0,294.0 L1214.0,295.0 L1224.0,294.0 L1230.0,291.0 L1232.0,286.0 L1234.0,283.0"/>
<path d="M1147.0,251.0 L1142.0,252.4 L1137.0,252.4 L1135.0,258.0 L1129.0,260.0 L1124.0,263.0 L1118.0,266.0 L1112.0,270.0 L1111.0,276.0 L1114.0,280.0 L1113.0,286.0 L1110.0,290.0 L1104.0,293.0 L1099.0,296.0 L1102.0,299.0 L1099.0,302.0 L1101.0,308.0 L1098.0,313.0 L1094.0,314.0 L1088.0,311.0 L1082.0,310.0 L1076.0,309.0 L1072.0,305.0 L1066.0,306.0 L1060.0,309.0 L1054.0,311.0 L1048.0,313.0 L1042.0,314.0 L1036.0,313.0 L1032.0,311.0"/>
<path d="M1114.5,330.0 L1115.6,338.5 L1117.7,347.1 L1123.1,353.5 L1128.4,362.0 L1131.6,370.5 L1135.9,379.1 L1142.3,387.6 L1148.7,396.1 L1155.1,403.6 L1161.5,410.0 L1165.7,413.2 L1170.0,417.5 L1174.3,423.9 L1176.4,430.3 L1180.7,436.7 L1187.1,444.1 L1191.3,451.6 L1197.7,455.9 L1204.1,461.2 L1212.7,466.5 L1221.2,469.7 L1226.5,468.7 L1227.6,463.3 L1230.8,458.0 L1232.9,451.6 L1232.3,443.1 L1232.9,434.5 L1234.0,430.3"/>
<path d="M1117.0,340.0 L1116.0,332.0 L1119.0,326.0 L1125.0,325.0 L1130.0,328.0 L1134.0,334.0 L1139.0,338.0 L1142.0,332.0 L1150.0,327.0 L1162.0,325.0 L1168.0,327.0 L1176.0,329.0 L1184.0,331.0 L1194.0,332.0 L1204.0,330.0 L1214.0,331.0 L1224.0,332.0 L1234.0,334.0"/>
</g>
<g fill="none" stroke="#2b5a45" stroke-width="1" stroke-opacity="0.55">
<path d="M651.0,300.0 L690.0,296.0 L730.0,310.0 L770.0,322.0 L800.0,334.0 L830.0,340.0 L856.0,312.0"/>
<path d="M856.0,312.0 L900.0,318.0 L930.0,314.0 L980.0,314.0"/>
<path d="M856.0,312.0 L880.0,340.0 L902.0,349.0 L942.0,366.0 L980.0,390.0 L1010.0,410.0"/>
<path d="M942.0,366.0 L938.0,405.0 L960.0,450.0 L987.0,507.0 L1030.0,540.0 L1057.0,562.0 L1110.0,560.0 L1160.0,549.0"/>
<path d="M802.0,165.0 L830.0,202.0 L870.0,215.0 L920.0,200.0 L950.0,157.0 L1000.0,170.0 L1058.0,147.0 L1141.0,153.0"/>
<path d="M684.0,295.0 L700.0,350.0 L690.0,397.0 L705.0,431.0"/>
<path d="M1141.0,153.0 L1120.0,190.0 L1105.0,219.0 L1100.0,260.0 L1125.0,293.0 L1170.0,320.0 L1221.0,402.0"/>
<path d="M987.0,507.0 L1020.0,490.0 L1055.0,477.0"/>
<path d="M691.0,204.0 L720.0,220.0 L735.0,270.0"/>
<path d="M950.0,157.0 L960.0,180.0 L945.0,208.0 L935.0,250.0 L930.0,290.0 L927.0,313.0"/>
</g>
<g stroke="#ffffff" stroke-opacity="0.18" stroke-width="1">
<line x1="714.5" y1="137" x2="714.5" y2="670"/>
<line x1="937.5" y1="137" x2="937.5" y2="670"/>
<line x1="1160.5" y1="137" x2="1160.5" y2="670"/>
<line x1="651" y1="333.5" x2="1234" y2="333.5"/>
<line x1="651" y1="556.5" x2="1234" y2="556.5"/>
</g>
<g>
<text x="776.5" y="241.4" font-size="15" font-weight="700" fill="#0c1512" textLength="60.0" lengthAdjust="spacingAndGlyphs">Svizzera</text>
<text x="1027.8" y="195.4" font-size="15" font-weight="700" fill="#0c1512" textLength="49.7" lengthAdjust="spacingAndGlyphs">Austria</text>
<text x="1042.2" y="283.9" font-size="15" font-weight="700" fill="#0c1512" textLength="60.0" lengthAdjust="spacingAndGlyphs">Slovenia</text>
<text x="1051.8" y="338.4" font-size="15" font-weight="700" fill="#0c1512" textLength="52.8" lengthAdjust="spacingAndGlyphs">Croazia</text>
<text x="1162.2" y="356.9" font-size="15" font-weight="700" fill="#0c1512" textLength="69.6" lengthAdjust="spacingAndGlyphs">Bosnia ed</text>
<text x="1158.6" y="371.9" font-size="15" font-weight="700" fill="#0c1512" textLength="77.7" lengthAdjust="spacingAndGlyphs">Erzegovina</text>
<text x="952.2" y="402.0" font-size="15" font-weight="700" fill="#0c1512" textLength="66.0" lengthAdjust="spacingAndGlyphs">San Marino</text>
<text x="969.0" y="454.3" font-size="15" font-weight="700" fill="#0c1512" textLength="30.0" lengthAdjust="spacingAndGlyphs">Italia</text>
<text x="757.3" y="413.9" font-size="15" font-weight="700" fill="#0c1512" textLength="56.2" lengthAdjust="spacingAndGlyphs">Monaco</text>
<text x="1222.0" y="459.0" font-size="15" font-weight="700" fill="#0c1512" textLength="83.0" lengthAdjust="spacingAndGlyphs">Montenegro</text>
</g><g filter="url(#halo)">
<text x="834.1" y="206.0" font-size="12.5" font-weight="400" fill="#171a19" stroke="#171a19" stroke-width="0.55" textLength="35.3" lengthAdjust="spacingAndGlyphs">Zurigo</text>
<circle cx="829.8" cy="201.5" r="2.4" fill="none" stroke="#1c1f1e" stroke-width="1.1"/>
<text x="955.1" y="156.1" font-size="12.5" font-weight="400" fill="#171a19" stroke="#171a19" stroke-width="0.55" textLength="43.9" lengthAdjust="spacingAndGlyphs">Monaco</text>
<circle cx="950.3" cy="156.9" r="2.4" fill="none" stroke="#1c1f1e" stroke-width="1.1"/>
<text x="955.1" y="167.8" font-size="12.5" font-weight="400" fill="#171a19" stroke="#171a19" stroke-width="0.55" textLength="52.8" lengthAdjust="spacingAndGlyphs">di Baviera</text>
<text x="1146.1" y="157.8" font-size="12.5" font-weight="400" fill="#171a19" stroke="#171a19" stroke-width="0.55" textLength="36.0" lengthAdjust="spacingAndGlyphs">Vienna</text>
<circle cx="1140.6" cy="152.8" r="2.4" fill="none" stroke="#1c1f1e" stroke-width="1.1"/>
<circle cx="1140.6" cy="152.8" r="1.1" fill="#1c1f1e"/>
<text x="690.6" y="274.4" font-size="12.5" font-weight="400" fill="#171a19" stroke="#171a19" stroke-width="0.55" textLength="40.8" lengthAdjust="spacingAndGlyphs">Ginevra</text>
<circle cx="735.0" cy="269.9" r="2.4" fill="none" stroke="#1c1f1e" stroke-width="1.1"/>
<text x="688.2" y="299.6" font-size="12.5" font-weight="400" fill="#171a19" stroke="#171a19" stroke-width="0.55" textLength="28.8" lengthAdjust="spacingAndGlyphs">Lione</text>
<circle cx="683.4" cy="294.6" r="2.4" fill="none" stroke="#1c1f1e" stroke-width="1.1"/>
<text x="860.5" y="316.0" font-size="12.5" font-weight="400" fill="#171a19" stroke="#171a19" stroke-width="0.55" textLength="35.3" lengthAdjust="spacingAndGlyphs">Milano</text>
<circle cx="855.7" cy="311.0" r="2.4" fill="none" stroke="#1c1f1e" stroke-width="1.1"/>
<text x="802.2" y="338.8" font-size="12.5" font-weight="400" fill="#171a19" stroke="#171a19" stroke-width="0.55" textLength="33.6" lengthAdjust="spacingAndGlyphs">Torino</text>
<circle cx="796.7" cy="333.6" r="2.4" fill="none" stroke="#1c1f1e" stroke-width="1.1"/>
<text x="850.9" y="375.5" font-size="12.5" font-weight="400" fill="#171a19" stroke="#171a19" stroke-width="0.55" textLength="38.6" lengthAdjust="spacingAndGlyphs">Genova</text>
<circle cx="846.1" cy="370.8" r="2.4" fill="none" stroke="#1c1f1e" stroke-width="1.1"/>
<text x="984.6" y="318.2" font-size="12.5" font-weight="400" fill="#171a19" stroke="#171a19" stroke-width="0.55" textLength="42.5" lengthAdjust="spacingAndGlyphs">Venezia</text>
<circle cx="979.8" cy="313.2" r="2.4" fill="none" stroke="#1c1f1e" stroke-width="1.1"/>
<text x="946.2" y="371.2" font-size="12.5" font-weight="400" fill="#171a19" stroke="#171a19" stroke-width="0.55" textLength="43.9" lengthAdjust="spacingAndGlyphs">Bologna</text>
<circle cx="942.0" cy="366.0" r="2.4" fill="none" stroke="#1c1f1e" stroke-width="1.1"/>
<text x="896.5" y="410.8" font-size="12.5" font-weight="400" fill="#171a19" stroke="#171a19" stroke-width="0.55" textLength="37.7" lengthAdjust="spacingAndGlyphs">Firenze</text>
<circle cx="938.3" cy="405.6" r="2.4" fill="none" stroke="#1c1f1e" stroke-width="1.1"/>
<text x="991.2" y="512.3" font-size="12.5" font-weight="400" fill="#171a19" stroke="#171a19" stroke-width="0.55" textLength="30.8" lengthAdjust="spacingAndGlyphs">Roma</text>
<circle cx="986.5" cy="507.3" r="2.4" fill="none" stroke="#1c1f1e" stroke-width="1.1"/>
<circle cx="986.5" cy="507.3" r="1.1" fill="#1c1f1e"/>
<text x="1018.5" y="567.5" font-size="12.5" font-weight="400" fill="#171a19" stroke="#171a19" stroke-width="0.55" textLength="34.5" lengthAdjust="spacingAndGlyphs">Napoli</text>
<circle cx="1057.4" cy="562.4" r="2.4" fill="none" stroke="#1c1f1e" stroke-width="1.1"/>
<text x="1165.6" y="553.5" font-size="12.5" font-weight="400" fill="#171a19" stroke="#171a19" stroke-width="0.55" textLength="20.4" lengthAdjust="spacingAndGlyphs">Bari</text>
<circle cx="1160.6" cy="548.6" r="2.4" fill="none" stroke="#1c1f1e" stroke-width="1.1"/>
<text x="1129.8" y="297.2" font-size="12.5" font-weight="400" fill="#171a19" stroke="#171a19" stroke-width="0.55" textLength="47.5" lengthAdjust="spacingAndGlyphs">Zagabria</text>
<circle cx="1125.0" cy="292.7" r="2.4" fill="none" stroke="#1c1f1e" stroke-width="1.1"/>
<circle cx="1125.0" cy="292.7" r="1.1" fill="#1c1f1e"/>
<text x="709.3" y="436.5" font-size="12.5" font-weight="400" fill="#171a19" stroke="#171a19" stroke-width="0.55" textLength="49.7" lengthAdjust="spacingAndGlyphs">Marsiglia</text>
<circle cx="704.5" cy="431.5" r="2.4" fill="none" stroke="#1c1f1e" stroke-width="1.1"/>
<text x="651.0" y="420.4" font-size="12.5" font-weight="400" fill="#171a19" stroke="#171a19" stroke-width="0.55" textLength="60.0" lengthAdjust="spacingAndGlyphs">Montpellier</text>
<text x="1225.8" y="406.5" font-size="12.5" font-weight="400" fill="#171a19" stroke="#171a19" stroke-width="0.55" textLength="49.2" lengthAdjust="spacingAndGlyphs">Sarajevo</text>
<circle cx="1221.5" cy="401.5" r="2.4" fill="none" stroke="#1c1f1e" stroke-width="1.1"/>
<circle cx="1221.5" cy="401.5" r="1.1" fill="#1c1f1e"/>
<text x="885.0" y="146.7" font-size="9.8" font-weight="400" fill="#2b2225" stroke="#2b2225" stroke-width="0.3" textLength="34.8" lengthAdjust="spacingAndGlyphs">Augusta</text>
<circle cx="923.4" cy="142.5" r="1.9" fill="none" stroke="#2c2427" stroke-width="1.1"/>
<text x="806.3" y="164.2" font-size="9.8" font-weight="400" fill="#2b2225" stroke="#2b2225" stroke-width="0.3" textLength="45.1" lengthAdjust="spacingAndGlyphs">Friburgo in</text>
<circle cx="802.4" cy="165.3" r="1.9" fill="none" stroke="#2c2427" stroke-width="1.1"/>
<text x="806.3" y="173.8" font-size="9.8" font-weight="400" fill="#2b2225" stroke="#2b2225" stroke-width="0.3" textLength="39.1" lengthAdjust="spacingAndGlyphs">Brisgovia</text>
<text x="758.3" y="194.7" font-size="9.8" font-weight="400" fill="#2b2225" stroke="#2b2225" stroke-width="0.3" textLength="30.2" lengthAdjust="spacingAndGlyphs">Basilea</text>
<circle cx="792.6" cy="190.5" r="1.9" fill="none" stroke="#2c2427" stroke-width="1.1"/>
<text x="695.4" y="208.4" font-size="9.8" font-weight="400" fill="#2b2225" stroke="#2b2225" stroke-width="0.3" textLength="31.7" lengthAdjust="spacingAndGlyphs">Digione</text>
<circle cx="691.3" cy="204.4" r="1.9" fill="none" stroke="#2c2427" stroke-width="1.1"/>
<text x="758.3" y="255.4" font-size="9.8" font-weight="400" fill="#2b2225" stroke="#2b2225" stroke-width="0.3" textLength="36.7" lengthAdjust="spacingAndGlyphs">Losanna</text>
<circle cx="754.7" cy="251.4" r="1.9" fill="none" stroke="#2c2427" stroke-width="1.1"/>
<text x="878.3" y="302.9" font-size="9.8" font-weight="400" fill="#2b2225" stroke="#2b2225" stroke-width="0.3" textLength="39.1" lengthAdjust="spacingAndGlyphs">Bergamo</text>
<circle cx="874.7" cy="299.2" r="1.9" fill="none" stroke="#2c2427" stroke-width="1.1"/>
<text x="959.9" y="180.8" font-size="9.8" font-weight="400" fill="#2b2225" stroke="#2b2225" stroke-width="0.3" textLength="44.6" lengthAdjust="spacingAndGlyphs">Salisburgo</text>
<circle cx="1007.9" cy="176.8" r="1.9" fill="none" stroke="#2c2427" stroke-width="1.1"/>
<text x="1061.4" y="150.8" font-size="9.8" font-weight="400" fill="#2b2225" stroke="#2b2225" stroke-width="0.3" textLength="16.8" lengthAdjust="spacingAndGlyphs">Linz</text>
<circle cx="1057.8" cy="147.3" r="1.9" fill="none" stroke="#2c2427" stroke-width="1.1"/>
<text x="948.5" y="212.0" font-size="9.8" font-weight="400" fill="#2b2225" stroke="#2b2225" stroke-width="0.3" textLength="39.7" lengthAdjust="spacingAndGlyphs">Innsbruck</text>
<circle cx="945.0" cy="208.0" r="1.9" fill="none" stroke="#2c2427" stroke-width="1.1"/>
<text x="1109.4" y="222.8" font-size="9.8" font-weight="400" fill="#2b2225" stroke="#2b2225" stroke-width="0.3" textLength="21.6" lengthAdjust="spacingAndGlyphs">Graz</text>
<circle cx="1104.6" cy="219.3" r="1.9" fill="none" stroke="#2c2427" stroke-width="1.1"/>
<text x="1041.0" y="305.1" font-size="9.8" font-weight="400" fill="#2b2225" stroke="#2b2225" stroke-width="0.3" textLength="28.8" lengthAdjust="spacingAndGlyphs">Trieste</text>
<circle cx="1037.4" cy="301.1" r="1.9" fill="none" stroke="#2c2427" stroke-width="1.1"/>
<text x="931.8" y="316.9" font-size="9.8" font-weight="400" fill="#2b2225" stroke="#2b2225" stroke-width="0.3" textLength="29.2" lengthAdjust="spacingAndGlyphs">Verona</text>
<circle cx="927.0" cy="313.2" r="1.9" fill="none" stroke="#2c2427" stroke-width="1.1"/>
<text x="723.0" y="331.1" font-size="9.8" font-weight="400" fill="#2b2225" stroke="#2b2225" stroke-width="0.3" textLength="37.2" lengthAdjust="spacingAndGlyphs">Grenoble</text>
<circle cx="718.7" cy="327.1" r="1.9" fill="none" stroke="#2c2427" stroke-width="1.1"/>
<text x="869.4" y="352.7" font-size="9.8" font-weight="400" fill="#2b2225" stroke="#2b2225" stroke-width="0.3" textLength="27.6" lengthAdjust="spacingAndGlyphs">Parma</text>
<circle cx="901.1" cy="348.7" r="1.9" fill="none" stroke="#2c2427" stroke-width="1.1"/>
<text x="685.8" y="400.7" font-size="9.8" font-weight="400" fill="#2b2225" stroke="#2b2225" stroke-width="0.3" textLength="38.9" lengthAdjust="spacingAndGlyphs">Avignone</text>
<circle cx="681.7" cy="396.7" r="1.9" fill="none" stroke="#2c2427" stroke-width="1.1"/>
<text x="1045.3" y="349.1" font-size="9.8" font-weight="400" fill="#2b2225" stroke="#2b2225" stroke-width="0.3" textLength="17.8" lengthAdjust="spacingAndGlyphs">Pola</text>
<circle cx="1041.0" cy="345.1" r="1.9" fill="none" stroke="#2c2427" stroke-width="1.1"/>
<text x="1099.8" y="390.6" font-size="9.8" font-weight="400" fill="#2b2225" stroke="#2b2225" stroke-width="0.3" textLength="18.0" lengthAdjust="spacingAndGlyphs">Zara</text>
<circle cx="1095.5" cy="386.6" r="1.9" fill="none" stroke="#2c2427" stroke-width="1.1"/>
<text x="1147.8" y="424.0" font-size="9.8" font-weight="400" fill="#2b2225" stroke="#2b2225" stroke-width="0.3" textLength="31.2" lengthAdjust="spacingAndGlyphs">Spalato</text>
<circle cx="1143.7" cy="420.0" r="1.9" fill="none" stroke="#2c2427" stroke-width="1.1"/>
<text x="1121.4" y="436.0" font-size="9.8" font-weight="400" fill="#2b2225" stroke="#2b2225" stroke-width="0.3" textLength="40.8" lengthAdjust="spacingAndGlyphs">Macarsca</text>
<circle cx="1166.3" cy="432.0" r="1.9" fill="none" stroke="#2c2427" stroke-width="1.1"/>
<text x="1201.8" y="433.8" font-size="9.8" font-weight="400" fill="#2b2225" stroke="#2b2225" stroke-width="0.3" textLength="29.2" lengthAdjust="spacingAndGlyphs">Mostar</text>
<circle cx="1197.5" cy="429.8" r="1.9" fill="none" stroke="#2c2427" stroke-width="1.1"/>
<text x="1059.0" y="481.1" font-size="9.8" font-weight="400" fill="#2b2225" stroke="#2b2225" stroke-width="0.3" textLength="33.6" lengthAdjust="spacingAndGlyphs">Pescara</text>
<circle cx="1054.9" cy="477.1" r="1.9" fill="none" stroke="#2c2427" stroke-width="1.1"/>
<text x="1022.4" y="577.9" font-size="9.8" font-weight="400" fill="#2b2225" stroke="#2b2225" stroke-width="0.3" textLength="35.6" lengthAdjust="spacingAndGlyphs">Sorrento</text>
<circle cx="1061.6" cy="574.0" r="1.9" fill="none" stroke="#2c2427" stroke-width="1.1"/>
<text x="1081.0" y="575.9" font-size="9.8" font-weight="400" fill="#2b2225" stroke="#2b2225" stroke-width="0.3" textLength="32.0" lengthAdjust="spacingAndGlyphs">Salerno</text>
<circle cx="1077.4" cy="572.0" r="1.9" fill="none" stroke="#2c2427" stroke-width="1.1"/>
<text x="1153.6" y="576.5" font-size="9.8" font-weight="400" fill="#2b2225" stroke="#2b2225" stroke-width="0.3" textLength="29.4" lengthAdjust="spacingAndGlyphs">Matera</text>
<circle cx="1150.0" cy="572.6" r="1.9" fill="none" stroke="#2c2427" stroke-width="1.1"/>
<text x="1141.0" y="587.1" font-size="9.8" font-weight="400" fill="#2b2225" stroke="#2b2225" stroke-width="0.3" textLength="32.0" lengthAdjust="spacingAndGlyphs">Taranto</text>
<circle cx="1176.6" cy="583.2" r="1.9" fill="none" stroke="#2c2427" stroke-width="1.1"/>
<text x="1207.0" y="577.9" font-size="9.8" font-weight="400" fill="#2b2225" stroke="#2b2225" stroke-width="0.3" textLength="28.3" lengthAdjust="spacingAndGlyphs">Brindisi</text>
<circle cx="1203.0" cy="574.4" r="1.9" fill="none" stroke="#2c2427" stroke-width="1.1"/>
<text x="1216.8" y="591.8" font-size="9.8" font-weight="400" fill="#2b2225" stroke="#2b2225" stroke-width="0.3" textLength="21.3" lengthAdjust="spacingAndGlyphs">Lecce</text>
<text x="1210.2" y="608.7" font-size="9.8" font-weight="400" fill="#2b2225" stroke="#2b2225" stroke-width="0.3" textLength="30.7" lengthAdjust="spacingAndGlyphs">Gallipoli</text>
<text x="872.5" y="563.1" font-size="9.8" font-weight="400" fill="#2b2225" stroke="#2b2225" stroke-width="0.3" textLength="20.4" lengthAdjust="spacingAndGlyphs">Olbia</text>
<circle cx="868.0" cy="559.1" r="1.9" fill="none" stroke="#2c2427" stroke-width="1.1"/>
<text x="834.9" y="573.5" font-size="9.8" font-weight="400" fill="#2b2225" stroke="#2b2225" stroke-width="0.3" textLength="30.8" lengthAdjust="spacingAndGlyphs">Sassari</text>
<circle cx="830.4" cy="569.4" r="1.9" fill="none" stroke="#2c2427" stroke-width="1.1"/>
<text x="785.1" y="582.2" font-size="9.8" font-weight="400" fill="#2b2225" stroke="#2b2225" stroke-width="0.3" textLength="31.3" lengthAdjust="spacingAndGlyphs">Alghero</text>
<circle cx="821.5" cy="578.4" r="1.9" fill="none" stroke="#2c2427" stroke-width="1.1"/>
<text x="857.0" y="651.1" font-size="9.8" font-weight="400" fill="#2b2225" stroke="#2b2225" stroke-width="0.3" textLength="31.1" lengthAdjust="spacingAndGlyphs">Cagliari</text>
<circle cx="852.8" cy="647.0" r="1.9" fill="none" stroke="#2c2427" stroke-width="1.1"/>
<text x="1209.0" y="477.5" font-size="9.8" font-weight="400" fill="#2b2225" stroke="#2b2225" stroke-width="0.3" textLength="37.4" lengthAdjust="spacingAndGlyphs">Podgorica</text>
<text x="1203.0" y="487.5" font-size="9.8" font-weight="400" fill="#2b2225" stroke="#2b2225" stroke-width="0.3" textLength="45.2" lengthAdjust="spacingAndGlyphs">Подгорица</text>
<text x="601.0" y="469.1" font-size="9.8" font-weight="400" fill="#2b2225" stroke="#2b2225" stroke-width="0.3" textLength="58.4" lengthAdjust="spacingAndGlyphs">Perpignano</text>
<text x="836.9" y="503.5" font-size="9.8" font-weight="400" fill="#1c2622" font-style="italic" stroke="#1c2622" stroke-width="0.3" textLength="23.8" lengthAdjust="spacingAndGlyphs">Corse</text>
<text x="829.9" y="604.6" font-size="9.8" font-weight="400" fill="#1c2622" font-style="italic" stroke="#1c2622" stroke-width="0.3" textLength="39.2" lengthAdjust="spacingAndGlyphs">Sardegna</text>
<text x="917.3" y="607.2" font-size="9.8" font-weight="400" fill="#172a31" stroke="#172a31" stroke-width="0.3" textLength="48.7" lengthAdjust="spacingAndGlyphs">Mar Tirreno</text>
<text x="650.6" y="522.5" font-size="9.8" font-weight="400" fill="#172a31" stroke="#172a31" stroke-width="0.3" textLength="12.6" lengthAdjust="spacingAndGlyphs">Mar</text>
<text x="1098" y="452" font-size="10" font-style="italic" fill="#1b323a" transform="rotate(33 1098 452)" stroke="#1b323a" stroke-width="0.3" textLength="58" lengthAdjust="spacingAndGlyphs">Mare Adriatico</text>
</g>
<g transform="translate(826.0,288.5)"><rect x="0.8" y="12.5" width="15.4" height="7" rx="2" fill="#4d6655" fill-opacity="0.8"/><rect x="0" y="0.8" width="17" height="14" rx="2.2" fill="#5b8ff7"/><rect x="2.1" y="4.2" width="5.6" height="5.2" rx="0.8" fill="#3c6658"/><rect x="9.3" y="4.2" width="5.6" height="5.2" rx="0.8" fill="#3c6658"/><circle cx="8.5" cy="0.9" r="1.5" fill="#b6ea6a"/><circle cx="3.8" cy="14.6" r="1.25" fill="#ffffff"/><circle cx="13.2" cy="14.6" r="1.25" fill="#ffffff"/></g>
<g transform="translate(850.8,287.8)"><rect x="0.8" y="12.5" width="15.4" height="7" rx="2" fill="#4d6655" fill-opacity="0.8"/><rect x="0" y="0.8" width="17" height="14" rx="2.2" fill="#5b8ff7"/><rect x="2.1" y="4.2" width="5.6" height="5.2" rx="0.8" fill="#3c6658"/><rect x="9.3" y="4.2" width="5.6" height="5.2" rx="0.8" fill="#3c6658"/><circle cx="8.5" cy="0.9" r="1.5" fill="#b6ea6a"/><circle cx="3.8" cy="14.6" r="1.25" fill="#ffffff"/><circle cx="13.2" cy="14.6" r="1.25" fill="#ffffff"/></g>
<g transform="translate(810.5,347.0)"><rect x="0.8" y="12.5" width="15.4" height="7" rx="2" fill="#4d6655" fill-opacity="0.8"/><rect x="0" y="0.8" width="17" height="14" rx="2.2" fill="#5b8ff7"/><rect x="2.1" y="4.2" width="5.6" height="5.2" rx="0.8" fill="#3c6658"/><rect x="9.3" y="4.2" width="5.6" height="5.2" rx="0.8" fill="#3c6658"/><circle cx="8.5" cy="0.9" r="1.5" fill="#b6ea6a"/><circle cx="3.8" cy="14.6" r="1.25" fill="#ffffff"/><circle cx="13.2" cy="14.6" r="1.25" fill="#ffffff"/></g>
<g transform="translate(819.5,353.2)"><rect x="0.8" y="12.5" width="15.4" height="7" rx="2" fill="#4d6655" fill-opacity="0.8"/><rect x="0" y="0.8" width="17" height="14" rx="2.2" fill="#5b8ff7"/><rect x="2.1" y="4.2" width="5.6" height="5.2" rx="0.8" fill="#3c6658"/><rect x="9.3" y="4.2" width="5.6" height="5.2" rx="0.8" fill="#3c6658"/><circle cx="8.5" cy="0.9" r="1.5" fill="#b6ea6a"/><circle cx="3.8" cy="14.6" r="1.25" fill="#ffffff"/><circle cx="13.2" cy="14.6" r="1.25" fill="#ffffff"/></g>
<g transform="translate(876.1,361.9)"><rect x="0.8" y="12.5" width="15.4" height="7" rx="2" fill="#4d6655" fill-opacity="0.8"/><rect x="0" y="0.8" width="17" height="14" rx="2.2" fill="#5b8ff7"/><rect x="2.1" y="4.2" width="5.6" height="5.2" rx="0.8" fill="#3c6658"/><rect x="9.3" y="4.2" width="5.6" height="5.2" rx="0.8" fill="#3c6658"/><circle cx="8.5" cy="0.9" r="1.5" fill="#b6ea6a"/><circle cx="3.8" cy="14.6" r="1.25" fill="#ffffff"/><circle cx="13.2" cy="14.6" r="1.25" fill="#ffffff"/></g>
<g transform="translate(872.9,363.7)"><rect x="0.8" y="12.5" width="15.4" height="7" rx="2" fill="#4d6655" fill-opacity="0.8"/><rect x="0" y="0.8" width="17" height="14" rx="2.2" fill="#5b8ff7"/><rect x="2.1" y="4.2" width="5.6" height="5.2" rx="0.8" fill="#3c6658"/><rect x="9.3" y="4.2" width="5.6" height="5.2" rx="0.8" fill="#3c6658"/><circle cx="8.5" cy="0.9" r="1.5" fill="#b6ea6a"/><circle cx="3.8" cy="14.6" r="1.25" fill="#ffffff"/><circle cx="13.2" cy="14.6" r="1.25" fill="#ffffff"/></g>
<g transform="translate(892.8,392.1)"><rect x="0.8" y="12.5" width="15.4" height="7" rx="2" fill="#4d6655" fill-opacity="0.8"/><rect x="0" y="0.8" width="17" height="14" rx="2.2" fill="#5b8ff7"/><rect x="2.1" y="4.2" width="5.6" height="5.2" rx="0.8" fill="#3c6658"/><rect x="9.3" y="4.2" width="5.6" height="5.2" rx="0.8" fill="#3c6658"/><circle cx="8.5" cy="0.9" r="1.5" fill="#b6ea6a"/><circle cx="3.8" cy="14.6" r="1.25" fill="#ffffff"/><circle cx="13.2" cy="14.6" r="1.25" fill="#ffffff"/></g>
<g transform="translate(930.3,381.5)"><rect x="0.8" y="12.5" width="15.4" height="7" rx="2" fill="#4d6655" fill-opacity="0.8"/><rect x="0" y="0.8" width="17" height="14" rx="2.2" fill="#5b8ff7"/><rect x="2.1" y="4.2" width="5.6" height="5.2" rx="0.8" fill="#3c6658"/><rect x="9.3" y="4.2" width="5.6" height="5.2" rx="0.8" fill="#3c6658"/><circle cx="8.5" cy="0.9" r="1.5" fill="#b6ea6a"/><circle cx="3.8" cy="14.6" r="1.25" fill="#ffffff"/><circle cx="13.2" cy="14.6" r="1.25" fill="#ffffff"/></g>
<g transform="translate(1053.0,531.5)"><rect x="0.8" y="12.5" width="15.4" height="7" rx="2" fill="#4d6655" fill-opacity="0.8"/><rect x="0" y="0.8" width="17" height="14" rx="2.2" fill="#5b8ff7"/><rect x="2.1" y="4.2" width="5.6" height="5.2" rx="0.8" fill="#3c6658"/><rect x="9.3" y="4.2" width="5.6" height="5.2" rx="0.8" fill="#3c6658"/><circle cx="8.5" cy="0.9" r="1.5" fill="#b6ea6a"/><circle cx="3.8" cy="14.6" r="1.25" fill="#ffffff"/><circle cx="13.2" cy="14.6" r="1.25" fill="#ffffff"/></g>
<g fill="#ffffff" fill-opacity="0.46" font-size="13.5">
<text x="512.0" y="226.7" textLength="183.6" lengthAdjust="spacingAndGlyphs">For development purposes only</text>
<text x="512.0" y="449.7" textLength="183.6" lengthAdjust="spacingAndGlyphs">For development purposes only</text>
<text x="512.0" y="672.7" textLength="183.6" lengthAdjust="spacingAndGlyphs">For development purposes only</text>
<text x="735.0" y="226.7" textLength="183.6" lengthAdjust="spacingAndGlyphs">For development purposes only</text>
<text x="735.0" y="449.7" textLength="183.6" lengthAdjust="spacingAndGlyphs">For development purposes only</text>
<text x="735.0" y="672.7" textLength="183.6" lengthAdjust="spacingAndGlyphs">For development purposes only</text>
<text x="958.0" y="226.7" textLength="183.6" lengthAdjust="spacingAndGlyphs">For development purposes only</text>
<text x="958.0" y="449.7" textLength="183.6" lengthAdjust="spacingAndGlyphs">For development purposes only</text>
<text x="958.0" y="672.7" textLength="183.6" lengthAdjust="spacingAndGlyphs">For development purposes only</text>
<text x="1181.0" y="226.7" textLength="183.6" lengthAdjust="spacingAndGlyphs">For development purposes only</text>
<text x="1181.0" y="449.7" textLength="183.6" lengthAdjust="spacingAndGlyphs">For development purposes only</text>
<text x="1181.0" y="672.7" textLength="183.6" lengthAdjust="spacingAndGlyphs">For development purposes only</text>
</g>
<rect x="1189.8" y="145.4" width="35.2" height="35.6" rx="2" fill="#ffffff"/>
<path d="M1200.4,161.4v-5h5M1209.4,156.4h5v5M1214.4,165.4v5h-5M1205.4,170.4h-5v-5" fill="none" stroke="#666666" stroke-width="2"/>
<circle cx="1207.5" cy="604.3" r="17.4" fill="#ffffff"/>
<path d="M1204.5,597.9l3.1,-3l3.1,3M1204.5,610.4l3.1,3l3.1,-3M1201.2,601.2l-3,3l3,3M1213.9,601.2l3,3l-3,3" fill="none" stroke="#666666" stroke-width="1.7"/>
<text x="658" y="664" font-size="18.5" font-weight="400" stroke="#ffffff" stroke-opacity="0.8" stroke-width="2.4" paint-order="stroke" stroke-linejoin="round" textLength="50.5" lengthAdjust="spacingAndGlyphs"><tspan fill="#6d98ee">G</tspan><tspan fill="#e4695c">o</tspan><tspan fill="#ecc03a">o</tspan><tspan fill="#6d98ee">g</tspan><tspan fill="#52b06c">l</tspan><tspan fill="#e4695c">e</tspan></text>
<rect x="791.3" y="658.5" width="443" height="12" fill="#f5f5f5" fill-opacity="0.8"/>
<g font-size="8.6" fill="#2c3436">
<text x="796.3" y="667.6" textLength="85.9" lengthAdjust="spacingAndGlyphs">Scorciatoie da tastiera</text>
<text x="893.3" y="667.6" textLength="295.5" lengthAdjust="spacingAndGlyphs">Dati mappa ©2026 GeoBasis-DE/BKG (©2009), Google, Inst. Geogr. Nacional</text>
<text x="1200.7" y="667.6" textLength="27" lengthAdjust="spacingAndGlyphs">Termini</text>
</g>
<path d="M888.2,660v9M1194.6,660v9" stroke="#5a6a6c" stroke-width="1" stroke-opacity="0.7"/>
</g>
</svg>
<div class="hr"></div>
</div></body></html>
